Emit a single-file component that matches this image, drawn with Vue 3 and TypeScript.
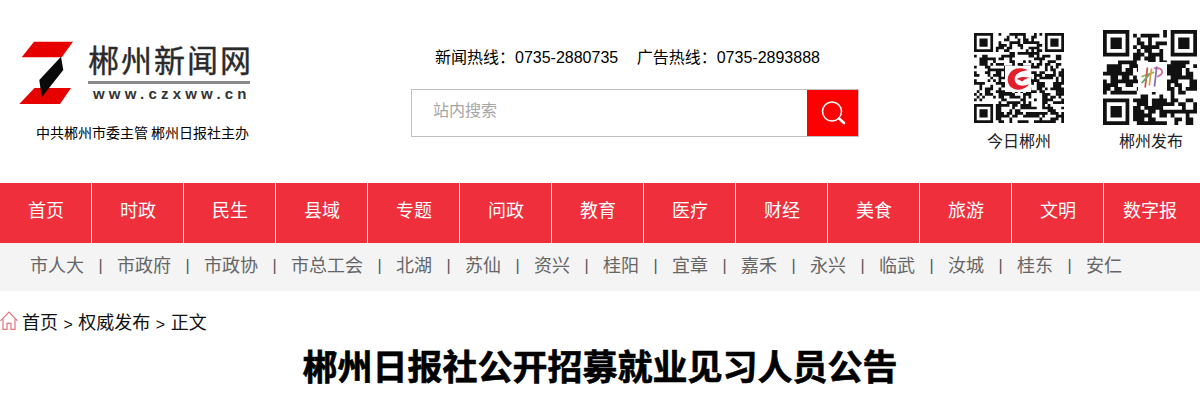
<script setup lang="ts">
const mainNav: string[] = ['首页','时政','民生','县域','专题','问政','教育','医疗','财经','美食','旅游','文明','数字报']
const subNav: string[] = ['市人大','市政府','市政协','市总工会','北湖','苏仙','资兴','桂阳','宜章','嘉禾','永兴','临武','汝城','桂东','安仁']
const crumbs: string[] = ['首页','权威发布','正文']

function qrPath(n: number, seed: number, density: number): string {
  let s = seed
  const rnd = () => { s = (s * 1664525 + 1013904223) >>> 0; return (s >>> 16) / 65536 }
  let d = ''
  const inFinder = (x: number, y: number) =>
    (x < 8 && y < 8) || (x >= n - 8 && y < 8) || (x < 8 && y >= n - 8)
  let prev = false
  for (let y = 0; y < n; y++) {
    for (let x = 0; x < n; x++) {
      const on = rnd() < (prev ? density + 0.12 : density - 0.08)
      prev = on
      if (!inFinder(x, y) && on) d += `M${x} ${y}h1v1h-1z`
    }
  }
  for (const [fx, fy] of [[0, 0], [n - 7, 0], [0, n - 7]]) {
    d += `M${fx} ${fy}h7v1h-7zM${fx} ${fy + 6}h7v1h-7zM${fx} ${fy + 1}h1v5h-1zM${fx + 6} ${fy + 1}h1v5h-1zM${fx + 2} ${fy + 2}h3v3h-3z`
  }
  return d
}
const qrOne = qrPath(33, 77, 0.54)
const qrTwo = qrPath(25, 9157, 0.56)
</script>

<template>
  <div class="page">
    <header class="top">
      <div class="brand">
        <div class="logo">
          <svg class="mark" width="56" height="66" viewBox="0 0 56 66">
            <path d="M15 .7h39L42.700 16.300H2.700z" fill="#e60000" />
            <path d="M15.500 47H52L41 63H.3z" fill="#e60000" />
            <path d="M42 15.700 44.300 29 22.700 56.300 20.300 39z" fill="#0a0a0a" />
          </svg>
          <div class="wordmark">
            <div class="cn">郴州新闻网</div>
            <div class="rule"></div>
            <div class="en">www.czxww.cn</div>
          </div>
        </div>
        <p class="sponsor">中共郴州市委主管 郴州日报社主办</p>
      </div>

      <div class="center">
        <p class="hotline"><span>新闻热线：0735-2880735</span><span>广告热线：0735-2893888</span></p>
        <div class="search">
          <span class="placeholder">站内搜索</span>
          <button class="search-btn" type="button" aria-label="搜索">
            <svg width="26" height="26" viewBox="0 0 26 26" fill="none" stroke="#fff">
              <circle cx="12" cy="11.500" r="9.500" stroke-width="1.500" />
              <path d="M19 18.500l5 4.500" stroke-width="2.600" stroke-linecap="round" />
            </svg>
          </button>
        </div>
      </div>

      <div class="codes">
        <figure class="code code-one">
          <svg class="qr" width="90" height="90" viewBox="0 0 33 33">
            <path :d="qrOne" fill="#111" />
          </svg>
          <svg class="emblem" width="26" height="26" viewBox="2 2 22 22">
            <path d="M21 5.500C15 2 6.500 4 4.500 11.500 3 18 8.500 22.500 14 22c3.500-.3 6.500-2 8.500-4.500-3 1-5.500 1.500-8 .8-3.500-1-5-4-4-7 1-3.200 4.500-5 10.500-5.800z" fill="#e2202c" />
            <path d="M12 13c3-2 7-2 11-1-3 .6-5 1.500-6.500 3.200-1.500-1-3-1.600-4.500-2.200z" fill="#e2202c" />
          </svg>
          <figcaption>今日郴州</figcaption>
        </figure>
        <figure class="code code-two">
          <svg class="qr" width="94" height="95" viewBox="0 0 25 25" preserveAspectRatio="none">
            <path :d="qrTwo" fill="#111" />
          </svg>
          <svg class="emblem emblem-two" width="29" height="30" viewBox="-2 -3 28 29" fill="none" stroke-width="1.700" stroke-linecap="round">
            <path d="M2 11 13 7" stroke="#8fb35a" />
            <path d="M7 3 5 21" stroke="#c9564f" />
            <path d="M2 17l7-8" stroke="#6fa56a" />
            <path d="M11 4 9 19" stroke="#d8a24a" />
            <path d="M14 3c8-1 10 5 3 8" stroke="#d4689a" />
            <path d="M16 2l-2 18" stroke="#8d6bb0" />
          </svg>
          <figcaption>郴州发布</figcaption>
        </figure>
      </div>
    </header>

    <nav class="main-nav">
      <a v-for="item in mainNav" :key="item" class="main-item">{{ item }}</a>
    </nav>

    <nav class="sub-nav">
      <template v-for="(item, i) in subNav" :key="item">
        <span v-if="i > 0" class="sep">|</span>
        <a class="sub-item">{{ item }}</a>
      </template>
    </nav>

    <div class="crumbs">
      <svg width="19" height="20" viewBox="0 0 19 20" fill="none" stroke="#e2727e" stroke-width="1.200">
        <path d="M.5 9.800 9 1l8.500 8.800" />
        <path d="M3 8v10.300h4v-6h4v6h4V8" />
      </svg>
      <span class="crumb-text">
        <template v-for="(c, i) in crumbs" :key="c">
          <span v-if="i > 0" class="crumb-sep">&gt;</span>{{ c }}
        </template>
      </span>
    </div>

    <h1 class="title">郴州日报社公开招募就业见习人员公告</h1>
  </div>
</template>

<style>
html, body { margin: 0; background: #fff; }
</style>

<style scoped>
.page {
  width: 1200px;
  height: 400px;
  overflow: hidden;
  font-family: "Liberation Sans", "Noto Sans CJK SC", sans-serif;
  color: #000;
}
.top {
  height: 183px;
  display: flex;
  box-sizing: border-box;
}
.brand {
  width: 411px;
  padding: 41px 0 0 19px;
  box-sizing: border-box;
  flex: none;
}
.logo {
  display: flex;
  align-items: flex-start;
  height: 66px;
}
.mark { flex: none; }
.wordmark {
  margin-left: 13px;
  width: 162px;
}
.cn {
  font-size: 31px;
  line-height: 38px;
  height: 38px;
  margin-top: 2px;
  letter-spacing: 2px;
  color: #2a2a2a;
  -webkit-text-stroke: 0.4px #2a2a2a;
  white-space: nowrap;
}
.rule {
  height: 3px;
  background: #8b8b8b;
}
.en {
  margin: 1px 0 0 5px;
  font-size: 15px;
  line-height: 18px;
  font-weight: 700;
  letter-spacing: 4.200px;
  color: #333;
  white-space: nowrap;
}
.sponsor {
  margin: 16px 0 0 17px;
  font-size: 14px;
  line-height: 20px;
  white-space: nowrap;
  word-spacing: -1px;
}
.center {
  width: 448px;
  flex: none;
  padding-top: 47px;
  box-sizing: border-box;
}
.hotline {
  margin: 0 0 21px 24px;
  font-size: 16px;
  line-height: 21px;
  display: flex;
  gap: 18.500px;
  white-space: nowrap;
}
.search {
  height: 48px;
  box-sizing: border-box;
  border: 1px solid #c0c0c0;
  display: flex;
  align-items: center;
  justify-content: space-between;
}
.placeholder {
  margin: 0 0 9px 21px;
  font-size: 16px;
  color: #a5a5a5;
}
.search-btn {
  width: 51px;
  height: 46px;
  border: 0;
  padding: 0;
  background: #f00;
  display: flex;
  align-items: center;
  justify-content: center;
}
.codes {
  flex: 1;
  display: flex;
}
.code {
  margin: 0;
  position: relative;
  display: flex;
  flex-direction: column;
  align-items: center;
  flex: none;
}
.code svg { display: block; }
.qr { filter: blur(0.35px); }
.code-one {
  width: 90px;
  margin: 33px 0 0 115px;
}
.code-two {
  width: 94px;
  margin: 30px 0 0 39px;
}
.code figcaption {
  font-size: 16px;
  line-height: 22px;
  white-space: nowrap;
  color: #222;
}
.code-one figcaption { margin-top: 8px; }
.code-two figcaption { margin: 6px 0 0 2px; }
.code .emblem {
  position: absolute;
  left: 31px;
  top: 33px;
  background: #fff;
}
.code .emblem-two {
  left: 35px;
  top: 32px;
}
.main-nav {
  height: 60px;
  background: #ef2f3b;
  display: flex;
}
.main-item {
  width: 91px;
  border-right: 1px solid #fff;
  flex: none;
  color: #fff;
  font-size: 18px;
  line-height: 57px;
  text-align: center;
  text-indent: 1px;
}
.main-item:last-child { border-right: 0; }
.sub-nav {
  height: 48px;
  box-sizing: border-box;
  padding: 0 0 2px 30px;
  background: #f4f4f4;
  display: flex;
  align-items: center;
  color: #666;
  font-size: 18px;
  white-space: nowrap;
}
.sub-item { line-height: 42px; }
.sep {
  width: 33px;
  flex: none;
  text-align: center;
  font-size: 16px;
  color: #555;
  line-height: 44px;
}
.crumbs {
  height: 46px;
  padding-top: 20px;
  box-sizing: border-box;
  display: flex;
  align-items: flex-start;
}
.crumb-text {
  margin: 0 0 0 3px;
  font-size: 18px;
  line-height: 24px;
  color: #111;
}
.crumb-sep {
  margin: 0 5.500px;
  font-size: 16px;
  position: relative;
  top: 1px;
}
.title {
  margin: 9px 0 0;
  font-size: 35px;
  line-height: 44px;
  font-weight: 700;
  text-align: center;
  -webkit-text-stroke: 0.6px #000;
}
</style>
